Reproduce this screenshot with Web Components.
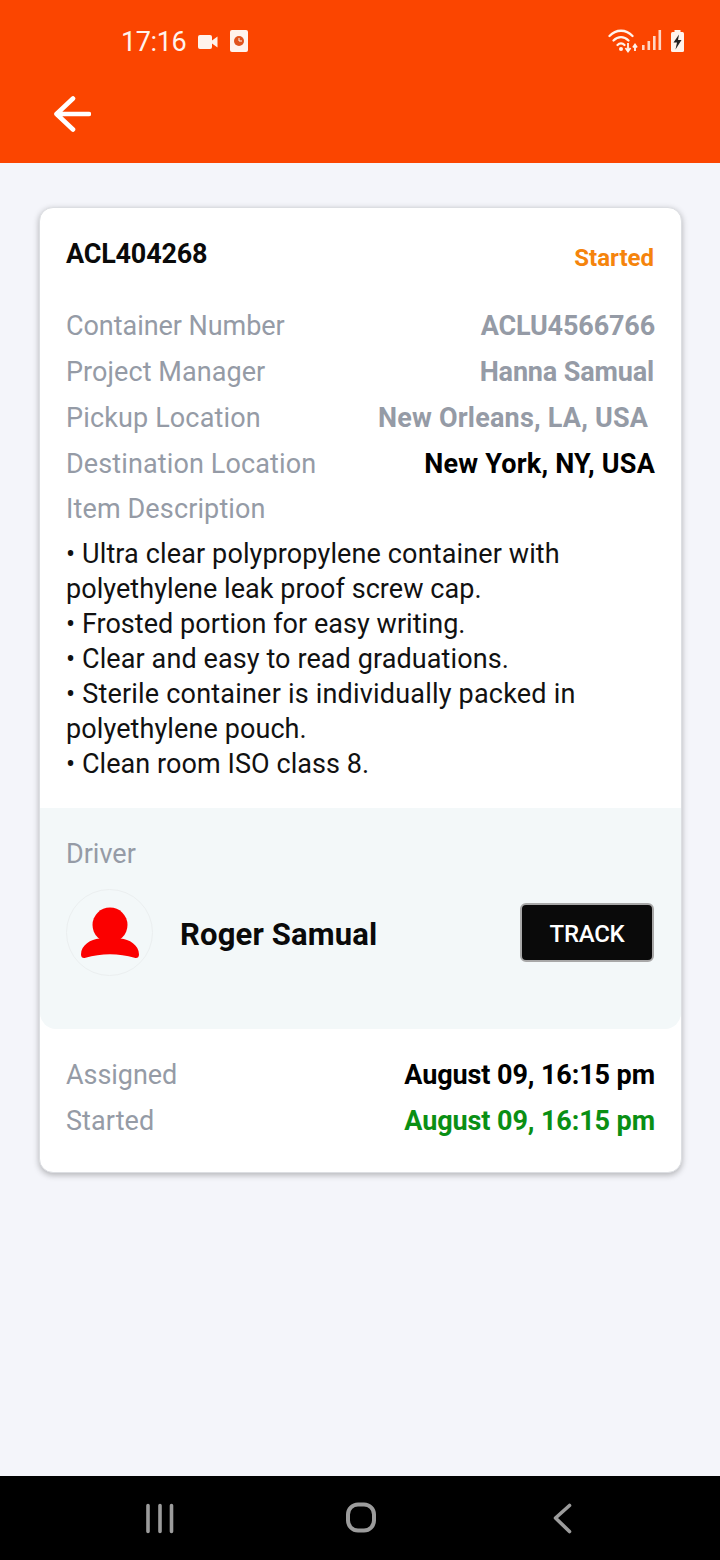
<!DOCTYPE html>
<html><head><meta charset="utf-8"><style>
html,body{margin:0;padding:0;background:#f4f5fa}
body{width:720px;height:1560px;font-family:Roboto,"Liberation Sans",sans-serif;display:flex;flex-direction:column}
</style></head><body>
<app-header></app-header>
<main-area>
<shipment-card>
  <info-row label="Container Number" lls="-.05" value="ACLU4566766" ls="-.15"></info-row>
  <info-row label="Project Manager" lls=".07" value="Hanna Samual" ls="-.15" mr="1"></info-row>
  <info-row label="Pickup Location" lls=".14" value="New Orleans, LA, USA " tone="grey" ls=".2"></info-row>
  <info-row label="Destination Location" lls=".12" value="New York, NY, USA" tone="black" ls=".2"></info-row>
  <info-row label="Item Description" lls=".13" style="margin-top:-1px"></info-row>
</shipment-card>
</main-area>
<nav-bar></nav-bar>
<script>
function def(name,html,init){customElements.define(name,class extends HTMLElement{constructor(){super();this.attachShadow({mode:'open'}).innerHTML=typeof html==='function'?html(this):html}connectedCallback(){if(init)init(this)}})}
def('app-header',`<style>:host{display:block;height:163px;background:#fb4500;color:#fff3ec;flex:none}
.st{display:flex;align-items:center;height:82px;padding:0 34px 0 121px;box-sizing:border-box}
.t{font-size:27px;width:77px;letter-spacing:-.4px;position:relative;top:1px}
.sp{flex:1}svg{display:block}
.back{padding:14px 0 0 53px}</style>
<div class="st"><span class="t">17:16</span>
<svg width="20" height="14" viewBox="0 0 20 14" style="margin-top:1px"><rect y="0" width="14" height="14" rx="2" fill="#fff3ec"/><path d="M14 5.500 19.500 1.500V12.500L14 8.500Z" fill="#fff3ec"/></svg>
<svg width="18" height="22" viewBox="0 0 18 22" style="margin-left:12px"><rect width="18" height="22" rx="2" fill="#fff3ec"/><circle cx="9" cy="11" r="5" fill="#e0531c"/><path d="M9 8V11H12" stroke="#fff3ec" stroke-width="1" fill="none"/></svg>
<span class="sp"></span>
<svg width="78" height="26" viewBox="0 0 78 26"><g fill="none" stroke="#fff3ec" stroke-width="2.300" stroke-linecap="round"><path d="M1.500 8C8 1 18 1 24.500 8"/><path d="M5.500 12.500C10 8 16 8 20.500 12.500"/><path d="M9.500 17C11.500 15 14.500 15 16.500 17"/></g><circle cx="13" cy="21" r="2" fill="#fff3ec"/>
<path d="M20 15V23M17.500 20 20 23.500 22.500 20" stroke="#fff3ec" stroke-width="1.800" fill="none"/><path d="M27 23V17.500M25 19.500 27 16.500 29 19.500" stroke="#fff3ec" stroke-width="1.800" fill="none"/>
<g fill="#ffd6c4"><rect x="34" y="17" width="2.600" height="5"/><rect x="39.500" y="13" width="2.600" height="9"/><rect x="45" y="8" width="2.600" height="14"/><rect x="50.500" y="2" width="2.600" height="20"/></g>
<rect x="63" y="4" width="13" height="20" rx="1.500" fill="#fff3ec"/><rect x="66.500" y="2" width="6" height="3" fill="#fff3ec"/><path d="M71 6.500 65.500 14.500H69L67.500 21.500 73.500 12H70Z" fill="#222"/></svg>
</div>
<div class="back"><svg width="38" height="36" viewBox="0 0 38 36" fill="none" stroke="#fff" stroke-width="4.600" stroke-linecap="round" stroke-linejoin="round"><path d="M20 2.500 3.500 18 20 33.500M3.500 18H36"/></svg></div>`);
def('main-area',`<style>:host{display:block;flex:1;padding:44px 38px 0 39px;box-sizing:border-box}</style><slot></slot>`);
def('info-row',h=>{const ls=h.getAttribute('ls')||0,t=h.getAttribute('tone'),lls=h.getAttribute('lls')||0,mr=h.getAttribute('mr')||0;return `<style>:host{display:flex;justify-content:space-between;height:46px;line-height:46px;font-size:27px;color:#959ba6;white-space:pre}
.v{font-weight:700;font-size:27px}</style><span style="letter-spacing:${lls}px">${h.getAttribute('label')||''}</span>${h.getAttribute('value')?`<span class="v" style="letter-spacing:${ls}px;margin-right:${mr}px;color:${t==='black'?'#000':t==='green'?'#0a8f14':'#959ba6'}">${h.getAttribute('value')}</span>`:''}`});
def('driver-panel',`<style>:host{display:block;height:221px;background:#f3f8f9;border-radius:0 0 16px 16px;padding:23px 27px 0 26px;box-sizing:border-box}
.l{font-size:27px;line-height:46px;color:#959ba6;height:36px}
.r{display:flex;align-items:center;margin-top:22px}
.a{width:87px;height:87px;box-sizing:border-box;border:1px solid #ebeff0;border-radius:50%;display:flex;align-items:center;justify-content:center}
.n{font-size:31px;font-weight:700;color:#0a0a0a;margin-left:27px;flex:1;letter-spacing:.15px;position:relative;top:2px}
.b{width:134px;height:59px;box-sizing:border-box;padding-top:2px;background:#0a0a0a;border:2px solid #a8a8a8;border-radius:6px;color:#fff;font-size:24px;font-weight:500;letter-spacing:-.3px;display:flex;align-items:center;justify-content:center}</style>
<div class="l">Driver</div><div class="r"><div class="a"><svg width="58" height="52" viewBox="0 0 58 52"><circle cx="29" cy="18" r="17.500" fill="#fb0000"/><path d="M21 28H37L39.500 31.500C48 32 58 38 58 47.500C58 50.500 56 51.500 53.500 50.800C38 46 20 46 4.500 50.800C2 51.500 0 50.500 0 47.500C0 38 10 32 18.500 31.500Z" fill="#fb0000"/></svg></div><div class="n">Roger Samual</div><div class="b">TRACK</div></div>`);
def('shipment-card',`<style>:host{display:block;height:966px;box-sizing:border-box;background:#fff;border-radius:14px;border:1px solid #dcdee2;box-shadow:0 2px 6px rgba(0,0,0,.28);font-family:Roboto,sans-serif}
.pad{padding:0 26px}
.top{display:flex;justify-content:space-between;height:95px;box-sizing:border-box}
.id{font-size:27px;font-weight:700;color:#0a0a0a;padding-top:28px;line-height:36px;letter-spacing:-.2px}
.st{font-size:24px;font-weight:700;color:#f5840c;padding-top:32px;line-height:36px;margin-right:1px}
.d{font-size:27px;line-height:35px;color:#111;margin-top:5px;height:271px}
.d div{white-space:pre}
.bot{padding-top:23px}</style>
<div class="pad"><div class="top"><span class="id">ACL404268</span><span class="st">Started</span></div><slot></slot>
<div class="d"><div style="letter-spacing:.13px">• Ultra clear polypropylene container with</div><div style="letter-spacing:.06px">polyethylene leak proof screw cap.</div><div style="letter-spacing:.04px">• Frosted portion for easy writing.</div><div style="letter-spacing:.1px">• Clear and easy to read graduations.</div><div style="letter-spacing:.2px">• Sterile container is individually packed in</div><div style="letter-spacing:.1px">polyethylene pouch.</div><div style="letter-spacing:.07px">• Clean room ISO class 8.</div></div></div>
<driver-panel></driver-panel>
<div class="pad bot"><info-row label="Assigned" lls="-.05" value="August 09, 16:15 pm" tone="black" ls="-.1"></info-row><info-row label="Started" lls=".07" value="August 09, 16:15 pm" tone="green" ls="-.1"></info-row></div>`);
def('nav-bar',`<style>:host{display:block;height:84px;background:#000;flex:none}svg{display:block}</style>
<svg width="720" height="84" viewBox="0 0 720 84" fill="none" stroke="#9c9c9c" stroke-linecap="round" stroke-linejoin="round"><path stroke-width="3.600" d="M148 29.500V55.500M160 29.500V55.500M171.500 29.500V55.500"/><rect x="348" y="28.500" width="26" height="26" rx="10" stroke-width="4"/><path stroke-width="3.600" d="M569.500 29.500 555.500 42 569.500 55.500"/></svg>`);
</script>
</body></html>
